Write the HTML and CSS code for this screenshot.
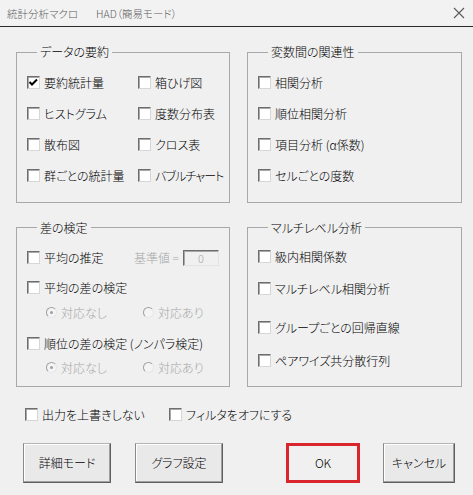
FILE: index.html
```html
<!DOCTYPE html>
<html lang="ja">
<head>
  <meta charset="UTF-8" />
  <title>統計分析マクロ HAD（簡易モード）</title>
  <link rel="stylesheet" href="styles.css">
</head>
<body>

<div class="titlebar">
  <span class="title">統計分析マクロ<span class="app">HAD（簡易モード）</span></span>
  <svg class="title-x" width="12" height="12" viewBox="0 0 12 12">
    <path d="M1 1 L11 11 M11 1 L1 11" stroke="#5a5a5a" stroke-width="1.1" fill="none" />
  </svg>
</div>

<div class="dialog">
  <div class="groups">
    <fieldset class="group">
      <legend>データの要約</legend>
      <div class="grid">
        <label class="check"><span class="box checked"><svg width="11" height="11" viewBox="0 0 11 11"><path d="M1.5 5 L4 7.5 L9 2.5" stroke="#000" stroke-width="2" fill="none" /></svg></span>要約統計量</label>
        <label class="check"><span class="box"></span>箱ひげ図</label>
        <label class="check"><span class="box"></span>ヒストグラム</label>
        <label class="check"><span class="box"></span>度数分布表</label>
        <label class="check"><span class="box"></span>散布図</label>
        <label class="check"><span class="box"></span>クロス表</label>
        <label class="check"><span class="box"></span>群ごとの統計量</label>
        <label class="check tight"><span class="box"></span>バブルチャート</label>
      </div>
    </fieldset>

    <fieldset class="group wide">
      <legend>変数間の関連性</legend>
      <div class="list">
        <label class="check"><span class="box"></span>相関分析</label>
        <label class="check"><span class="box"></span>順位相関分析</label>
        <label class="check"><span class="box"></span>項目分析 (α係数)</label>
        <label class="check"><span class="box"></span>セルごとの度数</label>
      </div>
    </fieldset>
  </div>

  <div class="groups second">
    <fieldset class="group tests">
      <legend>差の検定</legend>
      <div class="row r1">
        <label class="check"><span class="box"></span>平均の推定</label>
        <span class="base">基準値 = <span class="field">0</span></span>
      </div>
      <label class="check r2"><span class="box"></span>平均の差の検定</label>
      <div class="radios r3">
        <span class="radio"><span class="dot on"></span>対応なし</span>
        <span class="radio"><span class="dot"></span>対応あり</span>
      </div>
      <label class="check r4"><span class="box"></span>順位の差の検定 (ノンパラ検定)</label>
      <div class="radios r5">
        <span class="radio"><span class="dot on"></span>対応なし</span>
        <span class="radio"><span class="dot"></span>対応あり</span>
      </div>
    </fieldset>

    <fieldset class="group wide multi">
      <legend>マルチレベル分析</legend>
      <label class="check m1"><span class="box"></span>級内相関係数</label>
      <label class="check m2"><span class="box"></span>マルチレベル相関分析</label>
      <label class="check m3"><span class="box"></span>グループごとの回帰直線</label>
      <label class="check m4"><span class="box"></span>ペアワイズ共分散行列</label>
    </fieldset>
  </div>

  <div class="options">
    <label class="check"><span class="box"></span>出力を上書きしない</label>
    <label class="check"><span class="box"></span>フィルタをオフにする</label>
  </div>

  <div class="buttons">
    <button class="btn">詳細モード</button>
    <button class="btn graph">グラフ設定</button>
    <button class="btn ok">OK</button>
    <button class="btn cancel">キャンセル</button>
  </div>
</div>

</body>
</html>
```

FILE: styles.css
```css
body {
  margin: 0;
  width: 473px;
  height: 495px;
  background: #f0f0f0;
  font-family: "Noto Sans CJK JP", "Noto Sans", sans-serif;
  font-size: 12px;
  font-weight: 300;
  font-feature-settings: "palt";
  color: #000;
  overflow: hidden;
}

.titlebar {
  height: 26px;
  border-bottom: 1px solid #2a2a2a;
  display: flex;
  align-items: center;
  justify-content: space-between;
  padding: 0 8px 0 7px;
  background: #f2f2f2;
}

.title {
  color: #5e5e5e;
  font-size: 10.5px;
}

.app {
  margin-left: 18px;
}

.title-x {
  display: block;
  flex: none;
}

.dialog {
  padding: 18px 0 0 16px;
}

.groups {
  display: flex;
  gap: 17px;
}

.groups.second {
  margin-top: 18px;
}

.group {
  margin: 0;
  padding: 11px 10px 14px 10px;
  width: 214px;
  box-sizing: border-box;
  border: 1px solid #a8a8a8;
  min-width: 0;
}

.group.wide {
  width: 215px;
}

legend {
  margin-left: 10px;
  padding: 0 3px;
  line-height: 14px;
}

.grid {
  display: grid;
  grid-template-columns: 111px 1fr;
  grid-auto-rows: 24px;
  row-gap: 7.3px;
}

.list {
  display: grid;
  grid-auto-rows: 24px;
  row-gap: 7.3px;
}

.check {
  display: flex;
  align-items: center;
  gap: 4px;
  height: 24px;
  white-space: nowrap;
}

.tight {
  letter-spacing: -0.9px;
}

.box {
  width: 13px;
  height: 13px;
  box-sizing: border-box;
  background: #fff;
  border: 1px solid;
  border-color: #6d6d6d #d6d6d6 #d6d6d6 #6d6d6d;
  box-shadow: inset 1px 1px #a8a8a8;
  display: flex;
  align-items: center;
  justify-content: center;
  flex-shrink: 0;
}

.box svg {
  display: block;
}

/* 差の検定 */
.tests {
  padding: 0 10px 5px 10px;
}

.row {
  display: flex;
  align-items: center;
  height: 24px;
}

.base {
  margin-left: auto;
  color: #a6a6a6;
  display: flex;
  align-items: center;
  gap: 4px;
}

.field {
  width: 36px;
  height: 16px;
  box-sizing: border-box;
  border: 1px solid;
  border-color: #6d6d6d #e3e3e3 #e3e3e3 #6d6d6d;
  box-shadow: inset 1px 1px #a8a8a8;
  background: #f0f0f0;
  color: #a6a6a6;
  font-size: 11px;
  line-height: 14px;
  text-align: center;
}

.r1 { margin-top: 11px; }
.r2 { margin-top: 6px; }
.r3 { margin-top: 1px; }
.r4 { margin-top: 7px; }
.r5 { margin-top: 0; }

.radios {
  display: flex;
  align-items: center;
  height: 24px;
  padding-left: 19px;
  color: #a6a6a6;
}

.radio {
  display: flex;
  align-items: center;
  gap: 4px;
  width: 97px;
  flex: none;
}

.dot {
  width: 11px;
  height: 11px;
  box-sizing: border-box;
  border-radius: 50%;
  border: 1px solid;
  border-color: #a0a0a0 #e6e6e6 #e6e6e6 #a0a0a0;
  background: #f4f4f4;
  display: flex;
  align-items: center;
  justify-content: center;
}

.dot.on::after {
  content: "";
  width: 3px;
  height: 3px;
  border-radius: 50%;
  background: #a0a0a0;
}

/* マルチレベル分析 */
.multi {
  padding: 0 10px 13px 10px;
}

.m1 { margin-top: 10px; }
.m2 { margin-top: 8px; }
.m3 { margin-top: 15px; }
.m4 { margin-top: 9px; }

.options {
  display: flex;
  margin-top: 18px;
  padding-left: 9px;
  height: 20px;
  align-items: center;
}

.options .check {
  width: 144px;
  gap: 4px;
}

.buttons {
  display: flex;
  margin-top: 18px;
  padding-left: 7px;
}

.btn {
  height: 40px;
  width: 88px;
  font-family: inherit;
  font-size: 12px;
  font-weight: 300;
  font-feature-settings: "palt";
  color: #000;
  background: #e9e9e9;
  border: 1px solid;
  border-color: #b4b4b4 #5f5f5f #5f5f5f #8a8a8a;
  box-shadow: inset -1px -1px #a0a0a0, inset 1px 1px #fff;
  padding: 0;
}

.graph {
  margin-left: 24px;
}

.ok {
  width: 74px;
  margin-left: 63px;
  border: 3px solid #d9252b;
  box-shadow: none;
  background: #f0f0f0;
}

.cancel {
  width: 72px;
  margin-left: 23px;
}
```
